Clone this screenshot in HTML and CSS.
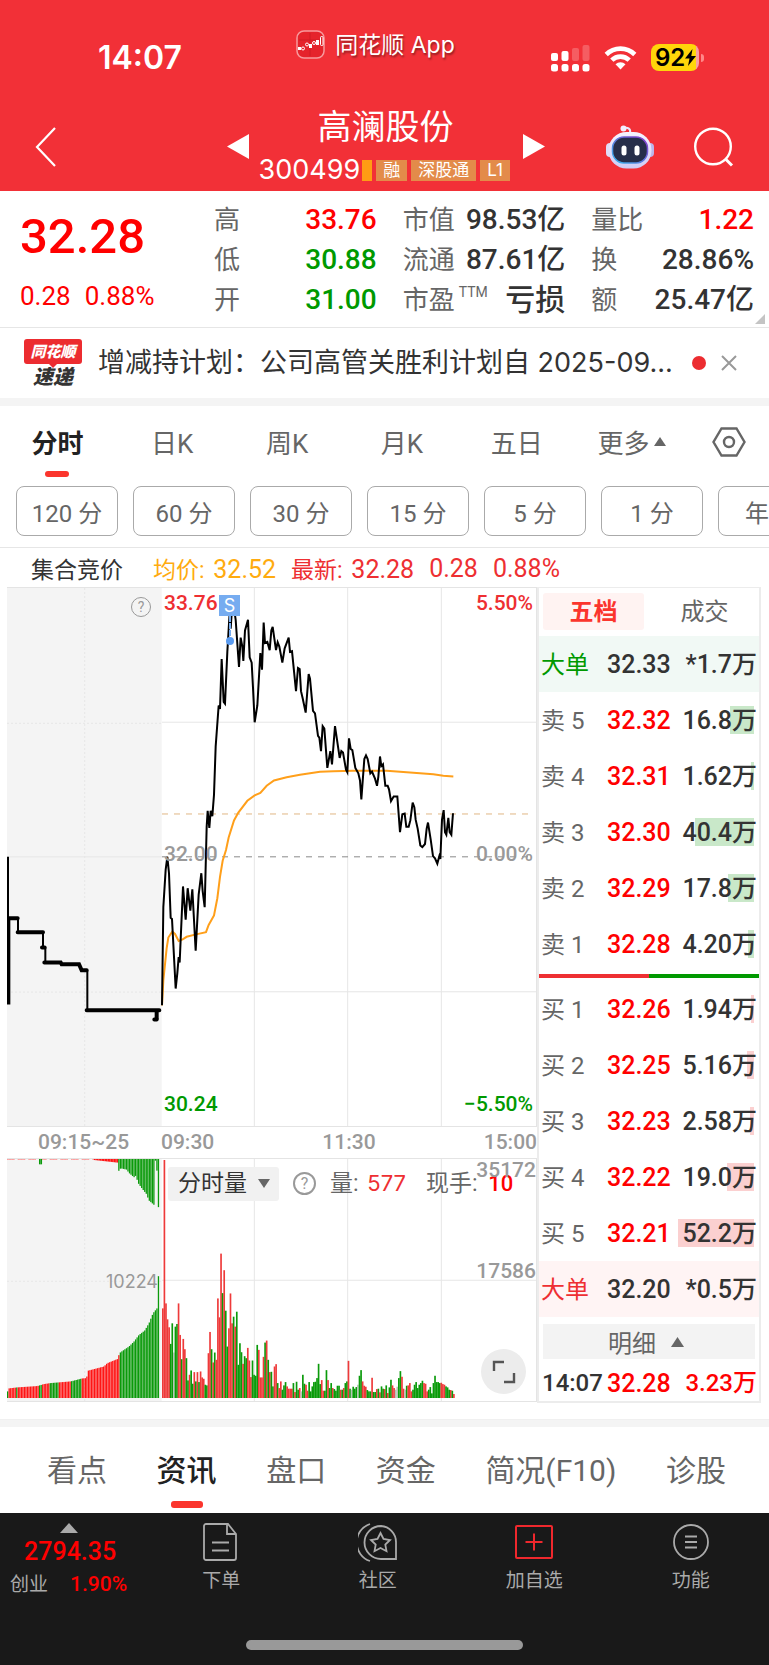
FILE: index.html
```html
<!DOCTYPE html>
<html lang="zh-CN">
<head>
<meta charset="utf-8">
<meta name="viewport" content="width=device-width, initial-scale=1">
<link rel="stylesheet" href="styles.css">
<title>高澜股份 300499</title>
</head>
<body>
  <header class="top">
    <div class="status">
      <span class="clock">14:07</span>
      <span class="app">
        <svg width="29" height="29" viewBox="0 0 29 29"><rect x="1" y="1" width="27" height="27" rx="7" fill="#e5232b" stroke="#f79a9d" stroke-width="1.5"/><path d="M14 3v23M3 10h23" stroke="#d01c24" stroke-width="1"/><g fill="#fff"><rect x="2" y="17" width="3" height="3"/><rect x="13" y="14" width="3" height="4"/><rect x="20" y="10" width="3" height="5"/></g><g fill="none" stroke="#fff"><circle cx="7" cy="18.500" r="1.500"/><circle cx="11" cy="14.500" r="1.500"/><circle cx="18" cy="13" r="1.500"/><rect x="24.500" y="6.500" width="2.500" height="9" rx="1"/></g></svg>
        同花顺 App
      </span>
      <span class="signals">
        <svg width="39" height="28" viewBox="0 0 39 28" fill="#fff"><rect x="0" y="9" width="7" height="8" rx="2"/><rect x="10.500" y="7" width="7" height="10" rx="2"/><rect x="21" y="4" width="7" height="13" rx="2" opacity=".22"/><rect x="31.500" y="1" width="7" height="16" rx="2" opacity=".22"/><rect x="0" y="20" width="7" height="7.500" rx="2.500"/><rect x="10.500" y="20" width="7" height="7.500" rx="2.500"/><rect x="21" y="20" width="7" height="7.500" rx="2.500"/><rect x="31.500" y="20" width="7" height="7.500" rx="2.500"/></svg>
        <svg width="33" height="25" viewBox="0 0 33 25" fill="none" stroke="#fff" stroke-width="4.600"><path d="M2.200 9.500a20.300 20.300 0 0 1 28.600 0"/><path d="M7.800 15.200a12.300 12.300 0 0 1 17.400 0"/><path d="M16.500 24.500l-5-5.300a7.200 7.200 0 0 1 10 0z" fill="#fff" stroke="none"/></svg>
        <span class="battery"><span class="level">92<svg width="11" height="17" viewBox="0 0 11 17"><path d="M7.500 0L0 9.500h4.500L3 17l8-10H6.300z" fill="#000"/></svg></span></span>
      </span>
    </div>
    <div class="titlebar">
      <button class="icon-btn back" aria-label="返回"><svg width="22" height="40" viewBox="0 0 22 40"><path d="M20 1L2 20l18 19" fill="none" stroke="#fff" stroke-width="2.200"/></svg></button>
      <div class="title">
        <button class="icon-btn" aria-label="上一只"><svg width="22" height="25" viewBox="0 0 22 25"><path d="M22 0v25L0 12.500z" fill="#fff"/></svg></button>
        <div class="stock">
          <h1>高澜股份</h1>
          <p><span class="code">300499</span><i class="strip"></i><span class="tag">融</span><span class="tag">深股通</span><span class="tag">L1</span></p>
        </div>
        <button class="icon-btn" aria-label="下一只"><svg width="22" height="25" viewBox="0 0 22 25"><path d="M0 0v25l22-12.500z" fill="#fff"/></svg></button>
      </div>
      <div class="tools">
        <button class="icon-btn" aria-label="智能助手">
          <svg width="48" height="44" viewBox="0 0 48 44">
            <defs>
              <linearGradient id="shell" x1="0" y1="0" x2="0" y2="1"><stop offset="0" stop-color="#f6f3ff"/><stop offset="1" stop-color="#cfcbf5"/></linearGradient>
              <linearGradient id="rim" x1="0" y1="1" x2="1" y2="0"><stop offset="0" stop-color="#35b7ee"/><stop offset="1" stop-color="#8a35c9"/></linearGradient>
            </defs>
            <path d="M24 8c1-4-2-6-6-5" fill="none" stroke="#ece6fb" stroke-width="2"/><circle cx="17.500" cy="3.500" r="3" fill="#f3efff"/>
            <rect x="0" y="18" width="8" height="14" rx="4" fill="#e0dcf8"/><rect x="40" y="18" width="8" height="14" rx="4" fill="#bbb5ea"/>
            <rect x="2.500" y="7" width="43" height="36.500" rx="18" fill="url(#shell)"/>
            <rect x="6.500" y="12" width="35" height="26" rx="11.500" fill="#262e4a" stroke="url(#rim)" stroke-width="1.500"/>
            <rect x="15.500" y="20.500" width="5" height="10" rx="2.500" fill="#fff"/><rect x="28.500" y="20.500" width="5" height="10" rx="2.500" fill="#fff"/>
          </svg>
        </button>
        <button class="icon-btn" aria-label="搜索"><svg width="40" height="40" viewBox="0 0 40 40" fill="none" stroke="#fff" stroke-width="2.400"><circle cx="19" cy="19.500" r="17.800"/><path d="M31.500 32l6.500 6.500" stroke-width="3"/></svg></button>
      </div>
    </div>
  </header>

  <section class="quote">
    <div class="last">
      <strong>32.28</strong>
      <p><span>0.28</span><span>0.88%</span></p>
    </div>
    <dl>
      <div><dt>高</dt><dd class="up">33.76</dd></div>
      <div><dt>低</dt><dd class="down">30.88</dd></div>
      <div><dt>开</dt><dd class="down">31.00</dd></div>
    </dl>
    <dl>
      <div><dt>市值</dt><dd>98.53亿</dd></div>
      <div><dt>流通</dt><dd>87.61亿</dd></div>
      <div><dt>市盈<sup>TTM</sup></dt><dd class="words">亏损</dd></div>
    </dl>
    <dl>
      <div><dt>量比</dt><dd class="up">1.22</dd></div>
      <div><dt>换</dt><dd>28.86%</dd></div>
      <div><dt>额</dt><dd>25.47亿</dd></div>
    </dl>
    <svg class="corner" width="10" height="10" viewBox="0 0 10 10"><path d="M10 0v10H0z" fill="#c4c4c4"/></svg>
  </section>

  <section class="news">
    <div class="express"><b>同花顺</b><em>速递</em></div>
    <a href="#">增减持计划：公司高管关胜利计划自 2025-09...</a>
    <i class="dot"></i>
    <button class="icon-btn" aria-label="关闭"><svg width="16" height="16" viewBox="0 0 16 16"><path d="M1 1l14 14M15 1L1 15" stroke="#999" stroke-width="2"/></svg></button>
  </section>

  <nav class="periods">
    <button class="active">分时</button>
    <button>日K</button>
    <button>周K</button>
    <button>月K</button>
    <button>五日</button>
    <button>更多<svg width="12" height="9" viewBox="0 0 12 9"><path d="M6 0l6 9H0z" fill="#666"/></svg></button>
    <button aria-label="设置"><svg width="34" height="30" viewBox="0 0 34 30" fill="none" stroke="#666" stroke-width="2.400"><path d="M9.500 1.500h15L32.500 15l-8 13.500h-15L1.500 15z"/><circle cx="17" cy="15" r="5"/></svg></button>
  </nav>
  <div class="chips">
    <button>120 分</button>
    <button>60 分</button>
    <button>30 分</button>
    <button>15 分</button>
    <button>5 分</button>
    <button>1 分</button>
    <button>年线</button>
  </div>

  <div class="summary">
    <span class="auction">集合竞价</span>
    <span class="avg">均价: <b>32.52</b></span>
    <span class="now">最新: <b>32.28</b></span>
    <span class="now"><b>0.28</b></span>
    <span class="now"><b>0.88%</b></span>
  </div>

  <main class="board">
    <div class="charts">
      <div class="price">
        <svg class="plot" viewBox="21 21 1587 1507" preserveAspectRatio="none">
          <rect class="shade" x="21" y="21" width="464" height="1507"/>
          <g class="grid">
            <path d="M763 21V1528M1043 21V1528M1324 21V1528M486 397H1608M486 1152H1608M21 774H486"/>
            <path class="dots" d="M254 21V1528M21 400H486M21 1153H486"/>
          </g>
          <path class="dash tan" d="M486 654H1594"/>
          <path class="dash" d="M486 774H1594"/>
          <path class="step" d="M24 774V1188M28 1188V946M54 946V985M129 985V1028M136 1028V1070M262 1092V1204M467 1204V1230M473 1230V1204"/>
          <path class="step thick" d="M26 946H53M53 985H129M126 1028H134M133 1070H182L185 1075H237L245 1092H260M260 1204H478M463 1230H470"/>
          <path class="avg-line" d="M486 1190L490 1120L500 1030L505 1000L517 983L525 990L536 1010L548 1005L560 998L585 992L618 985L626 965L642 938L652 890L660 830L668 785L678 755L686 720L702 672L715 650L742 617L764 602L781 595L800 575L822 560L860 551L900 544L960 536L1000 534L1060 533L1160 533L1200 536L1250 539L1300 543L1330 547L1360 549"/>
          <path class="price-line" d="M486 1190L490 915L497 810L502 774L507 820L512 945L516 948L527 1143L532 1100L536 1055L539 1070L549 857L557 950L563 862L571 925L577 865L587 1037L596 880L604 820L608 870L614 915L620 690L623 645L628 693L632 645L637 660L642 600L647 465L656 350L660 360L665 220L671 340L675 345L682 200L689 90L692 135L698 50L707 110L713 190L717 242L722 160L727 185L730 225L735 140L744 110L749 215L755 230L759 300L764 397L772 350L781 203L786 250L791 118L795 175L802 172L809 195L814 140L818 130L828 195L833 173L838 185L847 230L854 190L866 160L870 200L876 198L888 310L894 245L899 248L903 310L908 330L917 370L926 262L930 275L939 365L945 372L954 435L958 440L963 478L968 408L973 415L982 525L991 478L996 515L1005 408L1019 497L1024 478L1029 482L1038 530L1042 537L1047 442L1052 472L1057 475L1066 525L1075 540L1080 560L1084 613L1093 500L1098 490L1103 500L1111 540L1116 535L1125 555L1131 575L1135 550L1140 493L1144 520L1149 515L1156 575L1163 575L1167 585L1173 618L1181 605L1192 605L1200 705L1207 655L1214 653L1219 690L1226 690L1231 672L1238 622L1243 635L1247 670L1253 695L1261 742L1267 747L1275 738L1280 695L1284 678L1292 725L1299 772L1305 778L1312 793L1318 772L1321 780L1326 670L1331 643L1335 705L1339 712L1345 665L1349 705L1354 712L1359 652"/>
        </svg>
        <button class="help auction-help" aria-label="集合竞价说明">?</button>
        <span class="label high">33.76</span>
        <span class="label mid">32.00</span>
        <span class="label low">30.24</span>
        <span class="label high right">5.50%</span>
        <span class="label mid right">0.00%</span>
        <span class="label low right">−5.50%</span>
        <span class="marker">S</span>
      </div>
      <div class="times">
        <span>09:15~25</span>
        <span>09:30</span>
        <span>11:30</span>
        <span>15:00</span>
      </div>
      <div class="volume">
        <svg class="plot" viewBox="21 115 1587 729" preserveAspectRatio="none">
          <rect class="shade" x="21" y="115" width="464" height="729"/>
          <g class="grid">
            <path d="M763 115V844M1043 115V844M1324 115V844M486 480H1608"/>
            <path class="dots" d="M254 115V844M21 483H486"/>
          </g>
          <g id="bars"></g>
        </svg>
        <div class="vol-bar">
          <button class="pick">分时量<svg width="12" height="9" viewBox="0 0 12 9"><path d="M0 0h12L6 9z" fill="#666"/></svg></button>
          <button class="help" aria-label="成交量说明">?</button>
          <span>量: <b>577</b></span>
          <span>现手: <b class="hand">10</b></span>
        </div>
        <span class="scale top-scale">35172</span>
        <span class="scale half-scale">17586</span>
        <span class="scale auction-scale">10224</span>
        <button class="expand" aria-label="全屏"><svg width="24" height="24" viewBox="0 0 24 24" fill="none" stroke="#555" stroke-width="2.400"><path d="M2 11V2h10M22 13v9H12"/></svg></button>
      </div>
    </div>

    <aside class="book">
      <div class="book-tabs">
        <button class="active">五档</button>
        <button>成交</button>
      </div>
      <table class="sell">
        <tr class="big"><th>大单</th><td>32.33</td><td>*1.7万</td></tr>
        <tr><th>卖 5</th><td>32.32</td><td style="--depth: 24px">16.8万</td></tr>
        <tr><th>卖 4</th><td>32.31</td><td style="--depth: 3px">1.62万</td></tr>
        <tr><th>卖 3</th><td>32.30</td><td style="--depth: 59px">40.4万</td></tr>
        <tr><th>卖 2</th><td>32.29</td><td style="--depth: 26px">17.8万</td></tr>
        <tr><th>卖 1</th><td>32.28</td><td style="--depth: 6px">4.20万</td></tr>
      </table>
      <div class="ratio"></div>
      <table class="buy">
        <tr><th>买 1</th><td>32.26</td><td style="--depth: 3px">1.94万</td></tr>
        <tr><th>买 2</th><td>32.25</td><td style="--depth: 7px">5.16万</td></tr>
        <tr><th>买 3</th><td>32.23</td><td style="--depth: 4px">2.58万</td></tr>
        <tr><th>买 4</th><td>32.22</td><td style="--depth: 27px">19.0万</td></tr>
        <tr><th>买 5</th><td>32.21</td><td style="--depth: 76px">52.2万</td></tr>
        <tr class="big"><th>大单</th><td>32.20</td><td>*0.5万</td></tr>
      </table>
      <button class="detail">明细<svg width="13" height="10" viewBox="0 0 13 10"><path d="M6.500 0L13 10H0z" fill="#666"/></svg></button>
      <p class="tick"><span>14:07</span><b>32.28</b><b>3.23万</b></p>
    </aside>
  </main>

  <nav class="sections">
    <a href="#">看点</a>
    <a href="#" class="active">资讯</a>
    <a href="#">盘口</a>
    <a href="#">资金</a>
    <a href="#">简况(F10)</a>
    <a href="#">诊股</a>
  </nav>

  <footer class="dock">
    <div class="dock-row">
      <a href="#" class="index">
        <svg width="18" height="10" viewBox="0 0 18 10"><path d="M9 0l9 10H0z" fill="#aaa"/></svg>
        <b>2794.35</b>
        <span>创业<b>1.90%</b></span>
      </a>
      <a href="#"><svg width="40" height="40" viewBox="0 0 40 40" fill="none" stroke="#aaa" stroke-width="1.800"><path d="M5 2h22l8 10v24a2 2 0 0 1-2 2H5a2 2 0 0 1-2-2V4a2 2 0 0 1 2-2zM26 2v10h9M11 20.500h17M11 28.500h17"/></svg>下单</a>
      <a href="#"><svg width="40" height="40" viewBox="0 0 40 40" fill="none" stroke="#aaa" stroke-width="1.800"><path d="M23 4a16 16 0 1 0 0 33h15V20A16 16 0 0 0 23 4z"/><path d="M12 2a19.500 19.500 0 0 0 0 37"/><path d="M22.500 11l3 6 6.500 1-4.700 4.600 1.200 6.600-6-3.200-6 3.200 1.200-6.600L13 18l6.500-1z"/></svg>社区</a>
      <a href="#"><svg width="40" height="40" viewBox="0 0 40 40" fill="none" stroke="#f0282d" stroke-width="2"><rect x="2" y="4" width="36" height="32" rx="1"/><path d="M11.500 20h17M20 11.500v17"/></svg>加自选</a>
      <a href="#"><svg width="40" height="40" viewBox="0 0 40 40" fill="none" stroke="#aaa" stroke-width="1.800"><circle cx="20" cy="20" r="17"/><path d="M14 14.500h12M14 20h12M14 25.500h12"/></svg>功能</a>
    </div>
    <div class="home"></div>
  </footer>
  <script src="chart.js"></script>
</body>
</html>
```
FILE: styles.css
```css
* {
  box-sizing: border-box;
}

body {
  margin: 0;
  background: #fff;
  color: #333;
  font-family: Roboto, "Noto Sans CJK SC", sans-serif;
}

h1, p, dl, dd {
  margin: 0;
}

button {
  margin: 0;
  padding: 0;
  border: 0;
  background: none;
  color: inherit;
  font: inherit;
}

a {
  color: inherit;
  text-decoration: none;
}

b {
  font-weight: 500;
}

svg {
  display: block;
}

.icon-btn {
  display: flex;
}

.up {
  color: #f00;
}

.down {
  color: #090;
}

/* header */

.top {
  background: #f23037;
  color: #fff;
  font-family: Inter, "Noto Sans CJK SC", sans-serif;
}

.status {
  display: grid;
  grid-template-columns: 1fr auto 1fr;
  height: 92px;
  padding: 30px 70px 0;
}

.clock {
  padding: 13px 0 0 28px;
  font-size: 32px;
  font-weight: 600;
  line-height: 30px;
}

.app {
  display: flex;
  gap: 10px;
  margin-right: 18px;
  font-size: 23px;
  line-height: 30px;
  text-shadow: 1px 2px 2px rgba(0, 0, 0, .4);
}

.signals {
  display: flex;
  align-items: center;
  justify-content: flex-end;
  gap: 14px;
  height: 27px;
  margin-top: 14px;
}

.battery {
  position: relative;
  width: 48px;
  height: 27px;
  border-radius: 8px;
  background: linear-gradient(90deg, #ffd60a 45px, #f9a0a0 45px);
}

.battery::after {
  content: "";
  position: absolute;
  right: -5px;
  top: 10px;
  width: 3px;
  height: 8px;
  border-radius: 0 3px 3px 0;
  background: #f88;
}

.level {
  display: flex;
  align-items: center;
  padding-left: 4px;
  color: #000;
  font-size: 24px;
  font-weight: 600;
  line-height: 27px;
}

.titlebar {
  display: grid;
  grid-template-columns: 1fr auto 1fr;
  height: 99px;
  padding: 0 35px;
}

.back {
  align-self: start;
  margin-top: 35px;
}

.title {
  display: flex;
  gap: 10px;
  margin-left: 2px;
}

.title .icon-btn {
  margin-top: 42px;
}

.stock {
  width: 254px;
  text-align: center;
}

.stock h1 {
  margin-top: 15px;
  font-size: 34px;
  font-weight: 400;
  line-height: 40px;
}

.stock p {
  display: flex;
  align-items: center;
  margin-top: 11px;
  line-height: 24px;
}

.code {
  font-size: 27px;
}

.strip {
  width: 10px;
  height: 21px;
  margin-left: 2px;
  background: #ff9c14;
}

.tag {
  height: 21px;
  margin-left: 4px;
  padding: 0 7px;
  background: #e38b4a;
  font-size: 17px;
  line-height: 21px;
}

.tools {
  display: flex;
  justify-content: flex-end;
  gap: 40px;
  margin-top: 33px;
}

.tools .icon-btn {
  align-self: start;
}

.tools .icon-btn:last-child {
  margin-top: 2px;
}

/* quote */

.quote {
  position: relative;
  display: flex;
  gap: 26px;
  padding: 9px 15px 7px 20px;
  border-bottom: 1px solid #e6e6e6;
}

.last {
  width: 168px;
  color: #f00;
}

.last strong {
  display: block;
  margin-top: 11px;
  font-size: 49px;
  font-weight: 500;
  line-height: 52px;
}

.last p {
  display: flex;
  gap: 14px;
  margin-top: 17px;
  font-size: 26px;
  line-height: 32px;
}

.quote dl {
  flex: 1;
}

.quote dl div {
  display: flex;
  justify-content: space-between;
  height: 40px;
  line-height: 40px;
}

.quote dt {
  color: #666;
  font-size: 26px;
}

.quote dd {
  font-size: 28px;
  font-weight: 500;
}

.quote .words {
  font-size: 30px;
}

.quote sup {
  position: relative;
  top: -12px;
  margin-left: 4px;
  vertical-align: baseline;
  font-size: 14px;
  line-height: 1;
}

.corner {
  position: absolute;
  right: 4px;
  bottom: 3px;
}

/* news strip */

.news {
  display: flex;
  align-items: center;
  height: 70px;
  padding: 0 32px 0 24px;
  font-family: Inter, "Noto Sans CJK SC", sans-serif;
}

.news a {
  flex: 1;
  margin-left: 16px;
  font-size: 27px;
  line-height: 40px;
  white-space: nowrap;
  overflow: hidden;
}

.express {
  position: relative;
  width: 58px;
  text-align: center;
}

.express b {
  display: block;
  height: 25px;
  border-radius: 3px;
  background: #ec2c30;
  color: #fff;
  font-size: 15px;
  font-weight: 900;
  font-style: italic;
  line-height: 25px;
}

.express b::after {
  content: "";
  position: absolute;
  left: 25px;
  top: 25px;
  border: 4px solid transparent;
  border-top-color: #ec2c30;
}

.express em {
  display: block;
  margin-top: 3px;
  font-size: 20px;
  font-weight: 900;
  line-height: 20px;
}

.dot {
  width: 14px;
  height: 14px;
  margin-right: 15px;
  border-radius: 7px;
  background: #ec2c30;
}

/* periods */

.periods {
  display: grid;
  grid-template-columns: repeat(6, 1fr) 80px;
  height: 80px;
  border-top: 8px solid #f4f4f4;
}

.periods button {
  position: relative;
  display: flex;
  align-items: center;
  justify-content: center;
  gap: 4px;
  height: 71px;
  color: #666;
  font-size: 26px;
}

.periods .active {
  color: #222;
  font-weight: 700;
}

.periods .active::after,
.sections .active::after {
  content: "";
  position: absolute;
  bottom: 0;
  left: 50%;
  width: 24px;
  height: 6px;
  margin-left: -12px;
  border-radius: 3px;
  background: #fb352d;
}

.chips {
  display: flex;
  gap: 15px;
  padding: 8px 0 11px 16px;
  border-bottom: 1px solid #e6e6e6;
  overflow: hidden;
}

.chips button {
  flex: 0 0 102px;
  height: 50px;
  border: 1px solid #aaa;
  border-radius: 8px;
  color: #666;
  font-size: 24px;
}

.summary {
  display: flex;
  align-items: center;
  gap: 15px;
  height: 39px;
  padding: 1px 31px 0;
  font-size: 23px;
}

.summary b {
  margin-left: 3px;
  font-size: 25px;
  font-weight: 400;
}

.auction {
  margin-right: 15px;
}

.avg {
  color: #ffab0f;
}

.now {
  color: #ee2f32;
}

.now + .now b {
  margin-left: 0;
}

/* charts */

.board {
  display: grid;
  grid-template-columns: 1fr 224px;
  padding: 0 8px 16px 7px;
  border-bottom: 1px solid #f0f0f0;
}

.price,
.volume {
  position: relative;
  border: 1px solid #e4e4e4;
  border-width: 1px 1px 1px 0;
}

.price {
  height: 540px;
}

.volume {
  height: 244px;
}

.plot {
  width: 100%;
  height: 100%;
}

.plot path {
  fill: none;
  vector-effect: non-scaling-stroke;
}

.shade {
  fill: #f4f4f4;
}

.grid {
  stroke: #e6e6e6;
}

.dots {
  stroke-dasharray: 2 2;
}

.dash {
  stroke: #8a8a8a;
  stroke-dasharray: 6 6;
}

.tan {
  stroke: #e0b685;
}

.step {
  stroke: #000;
  stroke-width: 2px;
}

.thick {
  stroke-width: 4px;
  stroke-linecap: round;
}

.price-line {
  stroke: #000;
  stroke-width: 2px;
}

.avg-line {
  stroke: #ff9f1a;
  stroke-width: 2px;
}

.label {
  position: absolute;
  left: 157px;
  color: #999;
  font-size: 21px;
  font-weight: 500;
  line-height: 24px;
}

.label.right {
  left: auto;
  right: 3px;
}

.high {
  top: 3px;
  color: #ee2f32;
}

.mid {
  top: 254px;
}

.low {
  bottom: 10px;
  color: #090;
}

.marker {
  position: absolute;
  left: 212px;
  top: 7px;
  width: 21px;
  height: 21px;
  background: #76acf0;
  color: #fff;
  font-family: Inter, sans-serif;
  font-size: 18px;
  line-height: 21px;
  text-align: center;
}

.marker::before {
  content: "";
  position: absolute;
  left: 10px;
  top: 21px;
  height: 20px;
  border-left: 2px dashed #76acf0;
}

.marker::after {
  content: "";
  position: absolute;
  left: 7px;
  top: 42px;
  width: 8px;
  height: 8px;
  border-radius: 4px;
  background: #5a9bf0;
}

.help {
  width: 23px;
  height: 23px;
  border: 2px solid #999;
  border-radius: 50%;
  color: #999;
  font-size: 16px;
  line-height: 19px;
}

.auction-help {
  position: absolute;
  left: 124px;
  top: 9px;
  width: 20px;
  height: 20px;
  border-width: 1px;
  font-size: 14px;
  line-height: 18px;
}

.times {
  display: grid;
  grid-template-columns: 154px 1fr 1fr 1fr;
  height: 31px;
  color: #999;
  font-size: 21px;
  font-weight: 500;
  line-height: 31px;
}

.times span:nth-child(1) {
  padding-left: 31px;
}

.times span:nth-child(3) {
  text-align: center;
}

.times span:nth-child(4) {
  text-align: right;
}

.vol-bar {
  position: absolute;
  left: 161px;
  top: 7px;
  display: flex;
  align-items: center;
  gap: 14px;
  color: #666;
  font-size: 23px;
  line-height: 34px;
  white-space: nowrap;
}

.vol-bar span + span {
  margin-left: 6px;
}

.vol-bar b {
  margin-left: 3px;
  color: #ee2f32;
  font-weight: 400;
  font-family: Inter, sans-serif;
  font-size: 22px;
}

.vol-bar .hand {
  margin-left: 5px;
  color: #f00;
  font-family: Roboto, sans-serif;
  font-weight: 500;
}

.pick {
  display: flex;
  align-items: center;
  justify-content: space-between;
  width: 111px;
  height: 34px;
  padding: 0 9px 0 10px;
  border-radius: 3px;
  background: #f1f1f1;
  color: #333;
}

.scale {
  position: absolute;
  right: 0;
  color: #999;
  font-size: 21px;
  font-weight: 500;
  line-height: 24px;
}

.top-scale {
  top: -1px;
}

.half-scale {
  top: 100px;
}

.auction-scale {
  left: 99px;
  right: auto;
  top: 111px;
  font-family: Inter, sans-serif;
  font-size: 18px;
  font-weight: 400;
}

.expand {
  position: absolute;
  right: 10px;
  bottom: 7px;
  display: flex;
  align-items: center;
  justify-content: center;
  width: 45px;
  height: 45px;
  border-radius: 50%;
  background: #ececec;
}

/* order book */

.book {
  border: 2px solid #ececec;
  border-top-width: 1px;
}

.book-tabs {
  display: grid;
  grid-template-columns: 1fr 1fr;
  gap: 10px;
  padding: 5px 4px 6px;
  font-size: 24px;
  line-height: 34px;
  color: #666;
}

.book-tabs button {
  height: 37px;
  border-radius: 3px;
}

.book-tabs .active {
  background: #fff3f2;
  color: #fb352d;
  font-weight: 700;
}

.book table {
  width: 100%;
  table-layout: fixed;
  border-collapse: collapse;
}

.book td,
.book th {
  height: 56px;
  padding: 2px 0 0;
  color: #333;
  font-size: 25px;
  font-weight: 500;
  line-height: 30px;
  text-align: left;
}

.book th {
  width: 68px;
  padding-left: 2px;
  color: #666;
  font-size: 24px;
  font-weight: 400;
}

.book td:nth-child(2) {
  width: 66px;
  color: #f00;
}

.book td:last-child {
  padding-right: 2px;
  background: linear-gradient(var(--tint), var(--tint)) no-repeat right 5px center / var(--depth, 0) 28px;
  text-align: right;
}

.book .big td:nth-child(2) {
  color: #333;
}

.sell {
  --tint: #c9e8c9;
}

.buy {
  --tint: #fbd0d0;
}

.sell .big {
  background: #f1f9f5;
}

.buy .big {
  background: #fff4f4;
}

.sell .big th {
  color: #090;
}

.buy .big th {
  color: #ee2f32;
}

.ratio {
  height: 4px;
  margin: 2px 0 3px;
  background: linear-gradient(90deg, #ee2f32 50%, #090 50%);
}

.detail {
  display: flex;
  align-items: center;
  justify-content: center;
  gap: 15px;
  width: calc(100% - 8px);
  height: 35px;
  margin: 7px 4px 0;
  padding-right: 6px;
  background: #f3f3f3;
  color: #666;
  font-size: 24px;
}

.tick {
  display: flex;
  padding: 7px 2px 0 3px;
  font-size: 25px;
  line-height: 35px;
}

.tick span {
  flex: 0 0 65px;
  font-size: 24px;
  font-weight: 500;
  white-space: nowrap;
}

.tick b {
  color: #f00;
}

.tick b:last-child {
  margin-left: auto;
  font-size: 24px;
}

/* section tabs */

.sections {
  display: flex;
  justify-content: space-between;
  padding: 2px 43px 0 47px;
  border-top: 7px solid #f4f4f4;
  color: #666;
  font-size: 30px;
  line-height: 84px;
}

.sections .active {
  position: relative;
  color: #222;
  font-weight: 500;
}

.sections .active::after {
  bottom: 5px;
  width: 32px;
  height: 7px;
  margin-left: -16px;
}

/* dock */

.dock {
  padding-bottom: 16px;
  background: #191919;
  color: #aaa;
}

.dock-row {
  display: grid;
  grid-template-columns: 143px repeat(4, 1fr);
  height: 127px;
}

.dock a {
  display: flex;
  flex-direction: column;
  align-items: center;
  gap: 7px;
  padding-top: 9px;
  font-size: 19px;
  line-height: 24px;
}

.dock .index {
  align-items: flex-start;
  gap: 0;
  padding: 10px 0 0 10px;
}

.index svg {
  margin-left: 50px;
}

.index b {
  color: #f00;
}

.index > b {
  margin: 4px 0 5px 14px;
  font-size: 25px;
  line-height: 30px;
}

.index span b {
  margin-left: 22px;
  font-size: 21px;
}

.home {
  width: 36%;
  height: 10px;
  margin: 0 auto;
  border-radius: 5px;
  background: #999;
}
```
FILE: chart.js
```js
var RED = '#ee3a3a', GREEN = '#0a9a0a', GRAY = '#b8c4b8';
var bars = document.getElementById('bars');

function bar(x, y, w, h, color) {
  var r = document.createElementNS('http://www.w3.org/2000/svg', 'rect');
  r.setAttribute('x', x);
  r.setAttribute('y', y);
  r.setAttribute('width', w);
  r.setAttribute('height', h);
  r.setAttribute('fill', color);
  bars.appendChild(r);
}

// value at x on a polyline of [x, y] points
function at(points, x) {
  for (var i = 1; i < points.length; i++) {
    var a = points[i - 1], b = points[i];
    if (x <= b[0]) return a[1] + (b[1] - a[1]) * (x - a[0]) / (b[0] - a[0]);
  }
  return points[points.length - 1][1];
}

// call auction: matched volume at the bottom, unmatched at the top
var matched = [[21, 20], [25, 29], [50, 32], [110, 36], [130, 42], [150, 45], [210, 50], [245, 59], [258, 60], [261, 82], [310, 95], [320, 105], [352, 118], [356, 135], [370, 145], [385, 155], [400, 170], [415, 190], [432, 203], [445, 225], [457, 255], [469, 270], [473, 367]];
var unmatched = [[355, 35], [360, 28], [378, 32], [385, 42], [400, 55], [406, 50], [412, 72], [425, 90], [437, 105], [445, 125], [460, 138], [464, 5], [468, 5], [472, 145]];
var greens = [[20, 24], [46, 50], [113, 126], [148, 173], [209, 243], [355, 480]];

for (var i = 0; i < 100; i++) {
  var x = 21 + i * 4.57;
  var green = greens.some(function (g) { return x >= g[0] && x <= g[1]; });
  var color = green ? GREEN : '#ff1414';
  var h = at(matched, x);
  bar(x, 835 - h, 3.9, h, color);
  if (x >= 353) bar(x, 115, 3.9, at(unmatched, x), GREEN);
  else if (x > 280) bar(x, 115, 4.6, 3 + (x - 280) / 9, '#ff1414');
  else if (x > 113 && x < 123) bar(x, 115, 4.6, 16, GREEN);
  else if (i % 7 < 5) bar(x, 115, 4.6, 2, '#f77');
}

// one bar a minute from 09:30, r = up, g = down, n = flat
var minutes = '270r 717r 285r 237r 213r 163g 225g 137n 215g 223g 285r 190r 117g 178r 147r 120g 53g 70r 83g 43g 78r 50g 78r 48g 80r 62r 58r 40g 38g 135r 199r 147g 107r 137g 115r 300r 243r 435r 316g 385r 263g 155g 210r 315r 225r 245g 215r 260g 100g 165g 138g 103r 126g 120g 151r 113r 63r 113g 70g 67g 160g 145r 62r 62r 124r 167g 173r 115g 78r 79g 35g 95r 102r 45g 30r 50r 25g 38g 48g 35r 28r 28r 28r 45g 18r 49g 25g 30r 20n 70g 43g 40r 22r 48g 20g 35g 48g 49g 60g 103g 42g 54r 22r 22g 84g 54r 30g 45g 30r 27g 22g 37g 37g 25r 25g 30r 45g 50g 112r 28g 25n 34g 28g 33g 40n 67g 84g 50r 37r 34r 24g 20g 20g 61r 18g 18g 27r 28g 17r 35g 28g 27r 38g 15r 32g 55g 38r 30r 25n 34n 60g 81g 64r 28r 25n 37g 38r 45r 20r 25g 40g 48g 30g 40g 45g 52g 45r 43r 20r 25g 33g 14g 45g 67g 48g 48g 45g 46r 42r 40r 35g 32g 25g 24r 22g 12r'.split(' ');
var colors = { r: RED, g: GREEN, n: GRAY };

minutes.forEach(function (m, i) {
  var h = parseInt(m, 10);
  bar(486 + i * 4.72, 835 - h, 5, h, colors[m.slice(-1)]);
});
```
